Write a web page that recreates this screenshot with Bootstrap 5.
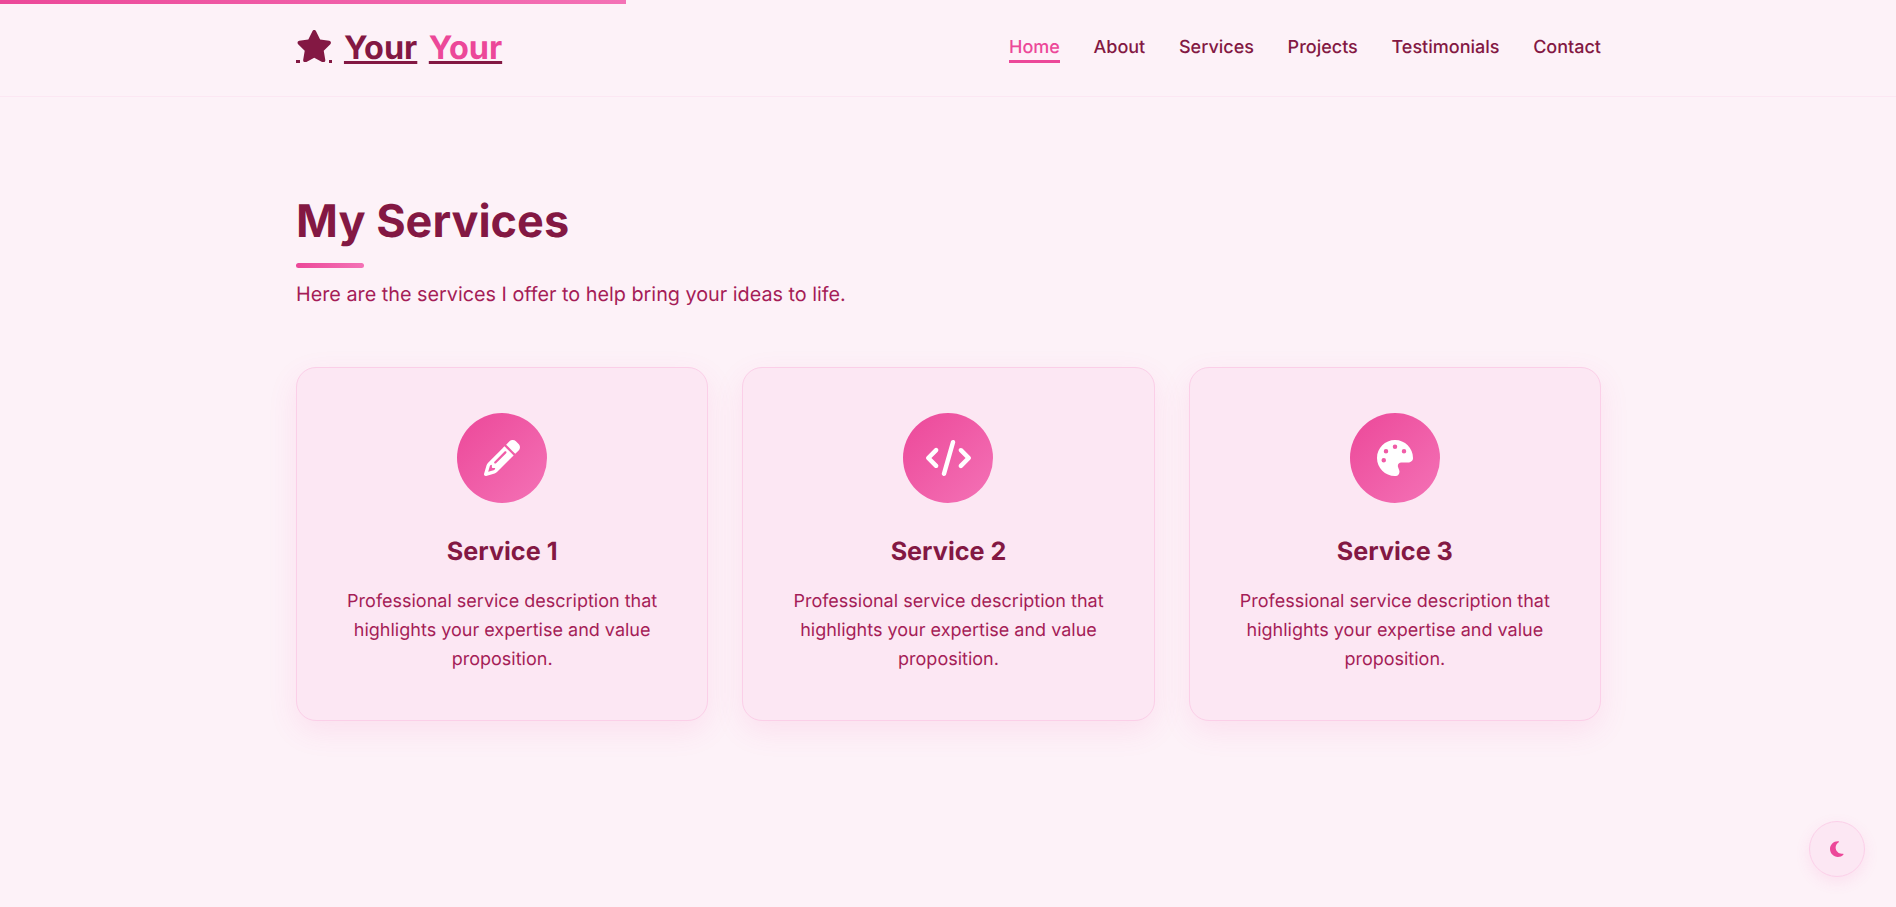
<!doctype html>
<html lang="en">

<head>
    <meta charset="utf-8" />
    <meta name="viewport" content="width=device-width, initial-scale=1" />
    <title>My Services</title>
    <link href="https://cdn.jsdelivr.net/npm/bootstrap@5.3.0/dist/css/bootstrap.min.css" rel="stylesheet" />
    <style>
        body {
            background-color: #fdf2f8;
            color: #831843;
            font-family: "Inter", "Liberation Sans", sans-serif;
            font-size: 18px;
            text-rendering: geometricPrecision;
            min-height: 907px;
        }

        .scroll-line {
            height: 4px;
            width: 33%;
            background: linear-gradient(90deg, #ec4899, #f472b6);
        }

        .page-width {
            max-width: 1400px;
            padding-left: 48px;
            padding-right: 47px;
        }

        .site-bar {
            height: 97px;
            margin-top: -4px;
            padding: 0;
            border-bottom: 1px solid #fce7f3;
        }

        .brand-link {
            display: flex;
            align-items: center;
            gap: 11.5px;
            padding: 0;
            margin: 0;
            font-size: 32.4px;
            font-weight: 700;
            line-height: 1.5;
            color: #831843;
            text-decoration: underline;
        }

        .brand-link:hover {
            color: #831843;
        }

        .brand-accent {
            color: #ec4899;
        }

        .brand-star {
            display: block;
            width: 36.45px;
            height: 33.5px;
            margin-bottom: 2.5px;
            background:
                linear-gradient(#831843, #831843) left bottom / 4px 3px no-repeat,
                linear-gradient(#831843, #831843) right bottom / 3.5px 3px no-repeat;
        }

        .brand-star svg {
            display: block;
            width: 36.45px;
            height: 32.4px;
        }

        .navbar-expand .navbar-nav.main-links {
            gap: 33.7px;
        }

        .navbar-expand .navbar-nav .nav-link {
            padding: 2px 0 0;
            font-size: 18px;
            font-weight: 500;
            color: #831843;
            border-bottom: 3px solid transparent;
            line-height: 25px;
        }

        .navbar-expand .navbar-nav .nav-link.active {
            color: #ec4899;
            border-bottom-color: #ec4899;
        }

        .services-area {
            padding-top: 97px;
        }

        .services-title {
            font-size: 45px;
            font-weight: 700;
            line-height: 1.2;
            margin-bottom: 15px;
        }

        .title-bar {
            width: 68px;
            height: 5px;
            border-radius: 3px;
            background: linear-gradient(90deg, #ec4899, #f472b6);
            margin-bottom: 12px;
        }

        .services-lead {
            font-size: 19.8px;
            line-height: 1.5;
            color: #a51d57;
            margin-bottom: 57px;
        }

        .services-row {
            --bs-gutter-x: 34px;
        }

        .service-box {
            background-color: #fce7f3;
            border: 1px solid #fbcfe8;
            border-radius: 20px;
            padding: 45px 36px 45.5px;
            box-shadow: 0 10px 30px rgba(236, 72, 153, 0.1);
            color: #a51d57;
        }

        .service-disc {
            width: 90px;
            height: 90px;
            border-radius: 50%;
            background: linear-gradient(135deg, #ec4899, #f472b6);
            margin-bottom: 34.4px;
        }

        .service-disc svg {
            display: block;
            fill: #fff;
        }

        .service-name {
            font-size: 25.2px;
            font-weight: 700;
            line-height: 1.2;
            color: #831843;
            margin-bottom: 21.1px;
        }

        .service-text {
            font-size: 18px;
            line-height: 1.6;
            margin-bottom: 0;
        }

        .moon-btn {
            position: fixed;
            right: 31px;
            bottom: 30px;
            width: 56px;
            height: 56px;
            padding: 0;
            background-color: #fce7f3;
            border: 1px solid #fbcfe8;
            box-shadow: 0 5px 15px rgba(236, 72, 153, 0.1);
        }

        .moon-btn svg {
            display: block;
            fill: #ec4899;
        }
    </style>
</head>

<body>
    <div class="scroll-line"></div>

    <nav class="navbar navbar-expand site-bar">
        <div class="container page-width">
            <a class="navbar-brand brand-link" href="#">
                <span class="brand-star">
                    <svg viewBox="0 0 576 512" aria-hidden="true" fill="#831843">
                        <path d="M316.9 18C311.6 7 300.4 0 288.1 0s-23.4 7-28.8 18L195 150.3 51.4 171.5c-12 1.8-22 10.2-25.7 21.7s-.7 24.2 7.9 32.7L137.8 329 113.2 474.7c-2 12 3 24.2 12.9 31.3s23 8 33.8 2.3l128.3-68.5 128.3 68.5c10.8 5.7 23.9 4.9 33.8-2.3s14.9-19.3 12.9-31.3L438.5 329 542.7 225.9c8.6-8.5 11.7-21.2 7.9-32.7s-13.7-19.9-25.7-21.7L381.2 150.3 316.9 18z" />
                    </svg>
                </span>
                <span>Your</span>
                <span class="brand-accent">Your</span>
            </a>
            <ul class="navbar-nav main-links ms-auto">
                <li class="nav-item"><a class="nav-link active" href="#">Home</a></li>
                <li class="nav-item"><a class="nav-link" href="#">About</a></li>
                <li class="nav-item"><a class="nav-link" href="#">Services</a></li>
                <li class="nav-item"><a class="nav-link" href="#">Projects</a></li>
                <li class="nav-item"><a class="nav-link" href="#">Testimonials</a></li>
                <li class="nav-item"><a class="nav-link" href="#">Contact</a></li>
            </ul>
        </div>
    </nav>

    <main class="services-area">
        <div class="container page-width">
            <h1 class="services-title">My Services</h1>
            <div class="title-bar"></div>
            <p class="services-lead">Here are the services I offer to help bring your ideas to life.</p>

            <div class="row services-row">
                <div class="col-4">
                    <div class="service-box text-center">
                        <div class="service-disc d-flex align-items-center justify-content-center mx-auto">
                            <svg width="36" height="36" viewBox="0 0 512 512" aria-hidden="true">
                                <path d="M410.3 231l11.3-11.3-33.9-33.9-62.1-62.1L291.7 89.8l-11.3 11.3-22.6 22.6L58.6 322.9c-10.4 10.4-18 23.3-22.2 37.4L1 480.7c-2.5 8.4-.2 17.5 6.1 23.7s15.3 8.5 23.7 6.1l120.3-35.4c14.1-4.2 27-11.8 37.4-22.2L387.7 253.7 410.3 231zM160 399.4l-9.1 22.7c-4 3.1-8.5 5.4-13.3 6.9L59.4 452l23-78.1c1.4-4.9 3.8-9.4 6.9-13.3l22.7-9.1v32c0 8.8 7.2 16 16 16h32zM362.7 18.7L348.3 33.2 325.7 55.8 314.3 67.1l33.9 33.9 62.1 62.1 33.9 33.9 11.3-11.3 22.6-22.6 14.5-14.5c25-25 25-65.5 0-90.5L453.3 18.7c-25-25-65.5-25-90.5 0zm-47.4 168l-144 144c-6.2 6.2-16.4 6.2-22.6 0s-6.2-16.4 0-22.6l144-144c6.2-6.2 16.4-6.2 22.6 0s6.2 16.4 0 22.6z" />
                            </svg>
                        </div>
                        <h3 class="service-name">Service 1</h3>
                        <p class="service-text">Professional service description that highlights your expertise and value proposition.</p>
                    </div>
                </div>
                <div class="col-4">
                    <div class="service-box text-center">
                        <div class="service-disc d-flex align-items-center justify-content-center mx-auto">
                            <svg width="45" height="36" viewBox="0 0 640 512" aria-hidden="true">
                                <path d="M392.8 1.2c-17-4.9-34.7 5-39.6 22l-128 448c-4.9 17 5 34.7 22 39.6s34.7-5 39.6-22l128-448c4.9-17-5-34.7-22-39.6zm80.6 120.1c-12.5 12.5-12.5 32.8 0 45.3L562.7 256l-89.4 89.4c-12.5 12.5-12.5 32.8 0 45.3s32.8 12.5 45.3 0l112-112c12.5-12.5 12.5-32.8 0-45.3l-112-112c-12.5-12.5-32.8-12.5-45.3 0zm-306.7 0c-12.5-12.5-32.8-12.5-45.3 0l-112 112c-12.5 12.5-12.5 32.8 0 45.3l112 112c12.5 12.5 32.8 12.5 45.3 0s12.5-32.8 0-45.3L77.3 256l89.4-89.4c12.5-12.5 12.5-32.8 0-45.3z" />
                            </svg>
                        </div>
                        <h3 class="service-name">Service 2</h3>
                        <p class="service-text">Professional service description that highlights your expertise and value proposition.</p>
                    </div>
                </div>
                <div class="col-4">
                    <div class="service-box text-center">
                        <div class="service-disc d-flex align-items-center justify-content-center mx-auto">
                            <svg width="36" height="36" viewBox="0 0 512 512" aria-hidden="true">
                                <path d="M512 256c0 .9 0 1.8 0 2.7c-.4 36.5-33.6 61.3-70.1 61.3H344c-26.5 0-48 21.5-48 48c0 3.4 .4 6.7 1 9.9c2.1 10.2 6.5 20 10.8 29.9c6.1 13.8 12.1 27.5 12.1 42c0 31.8-21.6 60.7-53.4 62c-3.5 .1-7 .2-10.6 .2C114.6 512 0 397.4 0 256S114.6 0 256 0S512 114.6 512 256zM128 288a32 32 0 1 0 -64 0 32 32 0 1 0 64 0zm0-96a32 32 0 1 0 0-64 32 32 0 1 0 0 64zM288 96a32 32 0 1 0 -64 0 32 32 0 1 0 64 0zm96 96a32 32 0 1 0 0-64 32 32 0 1 0 0 64z" />
                            </svg>
                        </div>
                        <h3 class="service-name">Service 3</h3>
                        <p class="service-text">Professional service description that highlights your expertise and value proposition.</p>
                    </div>
                </div>
            </div>
        </div>
    </main>

    <button class="btn rounded-circle moon-btn d-flex align-items-center justify-content-center" type="button" aria-label="Toggle theme">
        <svg width="13.5" height="18" viewBox="0 0 384 512" aria-hidden="true">
            <path d="M223.5 32C100 32 0 132.3 0 256S100 480 223.5 480c60.6 0 115.5-24.2 155.8-63.4c5-4.9 6.3-12.5 3.1-18.7s-10.1-9.7-17-8.5c-9.8 1.7-19.8 2.6-30.1 2.6c-96.9 0-175.5-78.8-175.5-176c0-65.8 36-123.1 89.3-153.3c6.1-3.5 9.2-10.5 7.7-17.3s-7.3-11.9-14.3-12.5c-6.3-.5-12.6-.8-19-.8z" />
        </svg>
    </button>

    <script src="https://cdn.jsdelivr.net/npm/bootstrap@5.3.0/dist/js/bootstrap.bundle.min.js"></script>
</body>

</html>
